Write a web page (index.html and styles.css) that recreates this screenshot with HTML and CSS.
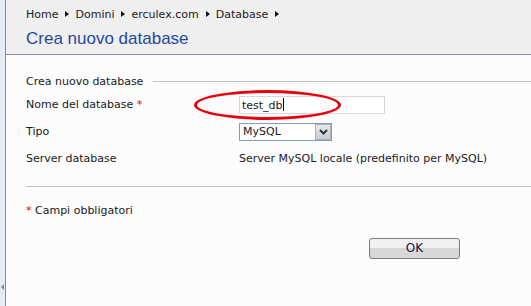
FILE: index.html
```html
<!DOCTYPE html>
<html>
<head>
<meta charset="utf-8" />
<title>Crea nuovo database</title>
<link rel="stylesheet" href="styles.css">
</head>
<body>
<div class="side"><span class="side_arrow"></span></div>
<div class="main">
  <div class="head">
    <div class="crumbs">
      <span>Home</span><span class="arr"></span>
      <span>Domini</span><span class="arr"></span>
      <span>erculex.com</span><span class="arr"></span>
      <span>Database</span><span class="arr"></span>
    </div>
    <h1>Crea nuovo database</h1>
  </div>
  <div class="content">
    <div class="legend"><span>Crea nuovo database</span><i></i></div>
    <div class="rows">
      <div class="lbl">Nome del database <b>*</b></div>
      <div class="val mark_wrap">
        <div class="field">test_db<span class="caret"></span></div>
        <div class="mark"></div>
      </div>
      <div class="lbl">Tipo</div>
      <div class="val">
        <div class="select"><span>MySQL</span><span class="drop"><svg width="9" height="6" viewBox="0 0 9 6"><path d="M1 1 L4.5 4.5 L8 1" fill="none" stroke="#333" stroke-width="2"/></svg></span></div>
      </div>
      <div class="lbl">Server database</div>
      <div class="val">Server MySQL locale (predefinito per MySQL)</div>
    </div>
    <div class="sep"></div>
    <div class="req"><b>*</b> Campi obbligatori</div>
    <div class="btns"><div class="btn">OK</div></div>
  </div>
</div>
</body>
</html>
```
FILE: styles.css
```css
* {
	margin: 0;
	padding: 0;
	box-sizing: border-box;
}
body {
	width: 531px;
	height: 306px;
	overflow: hidden;
	display: flex;
	font-family: "DejaVu Sans", sans-serif;
	font-size: 11px;
	color: #1a1a1a;
	background: #fcfcfc;
}
.side {
	width: 6px;
	background: #e4ecf7;
	border-right: 1px solid #8a8a8a;
	position: relative;
}
.side_arrow {
	position: absolute;
	left: 1px;
	top: 284px;
	border-right: 3px solid #888;
	border-top: 3px solid transparent;
	border-bottom: 3px solid transparent;
}
.main {
	flex: 1;
}
.head {
	background: #efefef;
	border-bottom: 1px solid #8a94a6;
	padding: 7px 0 0 20px;
	height: 55px;
}
.crumbs {
	display: flex;
	align-items: center;
	height: 14px;
}
.arr {
	display: inline-block;
	margin: 0 6px 0 7px;
	border-left: 4px solid #111;
	border-top: 3.5px solid transparent;
	border-bottom: 3.5px solid transparent;
}
h1 {
	font-family: "Liberation Sans", Arial, sans-serif;
	font-weight: normal;
	font-size: 17px;
	color: #1f47a3;
	margin-top: 8px;
}
.content {
	padding: 19px 0 0 20px;
}
.legend {
	display: flex;
	align-items: center;
	height: 14px;
}
.legend i {
	flex: 1;
	height: 1px;
	background: #bfc4cc;
	margin-left: 10px;
}
.rows {
	display: grid;
	grid-template-columns: 213px 1fr;
	grid-auto-rows: 27px;
	align-items: center;
	margin-top: 3px;
}
.lbl b, .req b {
	color: #d01010;
	font-weight: normal;
}
.mark_wrap {
	position: relative;
}
.field {
	width: 146px;
	height: 18px;
	border: 1px solid #d8d8d8;
	background: #fff;
	padding: 1px 0 0 2px;
}
.caret {
	display: inline-block;
	width: 1px;
	height: 13px;
	background: #000;
	vertical-align: -2px;
}
.mark {
	position: absolute;
	left: -45px;
	top: -6px;
	width: 147px;
	height: 30px;
	border: 3px solid #e8000c;
	border-radius: 50%;
}
.select {
	width: 93px;
	height: 18px;
	border: 1px solid #7f9db9;
	background: #fff;
	display: flex;
	justify-content: space-between;
	align-items: center;
	padding-left: 3px;
}
.drop {
	width: 16px;
	height: 16px;
	background: linear-gradient(#e8e8ec, #c8ccd4);
	border: 1px solid #a8b0bd;
	display: flex;
	align-items: center;
	justify-content: center;
}
.sep {
	height: 1px;
	background: #bfc4cc;
	margin-top: 14px;
}
.req {
	margin-top: 17px;
}
.btns {
	display: flex;
	padding-left: 343px;
	margin-top: 21px;
}
.btn {
	width: 91px;
	height: 21px;
	border: 1px solid #7a7a7a;
	border-radius: 3px;
	background: linear-gradient(#f0f0f0 50%, #d8d8d8 50%);
	text-align: center;
	line-height: 19px;
	font-size: 12px;
	color: #10104a;
}
```
